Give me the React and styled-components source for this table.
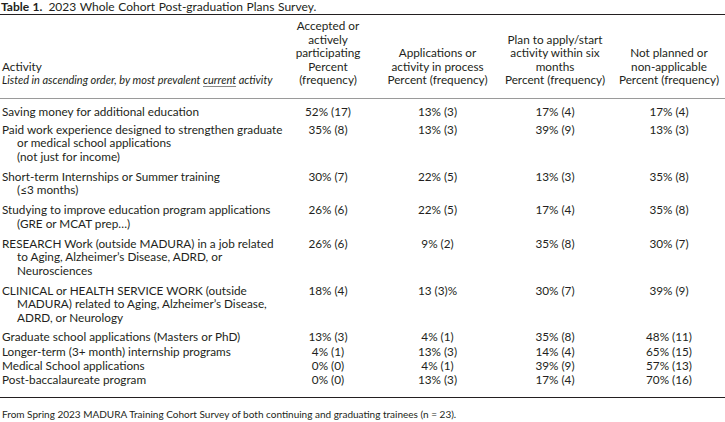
import styled, { createGlobalStyle } from "styled-components";

const GlobalStyle = createGlobalStyle`
  html, body {
    margin: 0;
    padding: 0;
    background: #ffffff;
    overflow: hidden;
  }
  body {
    font-family: Lato, "Open Sans", sans-serif;
    color: #231f20;
  }
`;

const columns = [
  ["Accepted or", "actively", "participating", "Percent", "(frequency)"],
  ["Applications or", "activity in process", "Percent (frequency)"],
  ["Plan to apply/start", "activity within six", "months", "Percent (frequency)"],
  ["Not planned or", "non-applicable", "Percent (frequency)"],
];

const rows = [
  { pt: 6, lines: ["Saving money for additional education"], values: ["52% (17)", "13% (3)", "17% (4)", "17% (4)"] },
  {
    pt: 4.5,
    lines: ["Paid work experience designed to strengthen graduate", "or medical school applications", "(not just for income)"],
    values: ["35% (8)", "13% (3)", "39% (9)", "13% (3)"],
  },
  { pt: 6.5, lines: ["Short-term Internships or Summer training", "(≤3 months)"], values: ["30% (7)", "22% (5)", "13% (3)", "35% (8)"] },
  {
    pt: 6.5,
    lines: ["Studying to improve education program applications", "(GRE or MCAT prep…)"],
    values: ["26% (6)", "22% (5)", "17% (4)", "35% (8)"],
  },
  {
    pt: 6.5,
    lines: ["RESEARCH Work (outside MADURA) in a job related", "to Aging, Alzheimer’s Disease, ADRD, or", "Neurosciences"],
    values: ["26% (6)", "9% (2)", "35% (8)", "30% (7)"],
  },
  {
    pt: 6.5,
    lines: ["CLINICAL or HEALTH SERVICE WORK (outside", "MADURA) related to Aging, Alzheimer’s Disease,", "ADRD, or Neurology"],
    values: ["18% (4)", "13 (3)%", "30% (7)", "39% (9)"],
  },
  { pt: 5.5, lines: ["Graduate school applications (Masters or PhD)"], values: ["13% (3)", "4% (1)", "35% (8)", "48% (11)"] },
  { pt: 1.5, lines: ["Longer-term (3+ month) internship programs"], values: ["4% (1)", "13% (3)", "14% (4)", "65% (15)"] },
  { pt: 0.5, lines: ["Medical School applications"], values: ["0% (0)", "4% (1)", "39% (9)", "57% (13)"] },
  { pt: 0.5, lines: ["Post-baccalaureate program"], values: ["0% (0)", "13% (3)", "17% (4)", "70% (16)"] },
];

export default function App() {
  return (
    <>
      <GlobalStyle />
      <Styled.Page>
        <Styled.Caption>
          <Styled.Label>Table 1.</Styled.Label>2023 Whole Cohort Post-graduation Plans Survey.
        </Styled.Caption>
        <Styled.Table>
          <colgroup>
            <col style={{ width: "278px" }} />
            <col style={{ width: "100px" }} />
            <col style={{ width: "119px" }} />
            <col style={{ width: "116px" }} />
            <col style={{ width: "112px" }} />
          </colgroup>
          <thead>
            <tr>
              <Styled.HeadCell $align="left">
                <Styled.Line>Activity</Styled.Line>
                <Styled.Note>
                  Listed in ascending order, by most prevalent <u>current</u> activity
                </Styled.Note>
              </Styled.HeadCell>
              {columns.map((lines) => (
                <Styled.HeadCell key={lines[0]} $align="center">
                  {lines.map((line) => (
                    <Styled.Line key={line}>{line}</Styled.Line>
                  ))}
                </Styled.HeadCell>
              ))}
            </tr>
          </thead>
          <tbody>
            {rows.map((row, index) => (
              <tr key={row.lines[0]}>
                <Styled.Cell $pt={row.pt} $last={index === rows.length - 1} $align="left">
                  {row.lines.map((line, i) => (
                    <Styled.Line key={line} $indent={i > 0}>
                      {line}
                    </Styled.Line>
                  ))}
                </Styled.Cell>
                {row.values.map((value, i) => (
                  <Styled.Cell key={i} $pt={row.pt} $last={index === rows.length - 1} $align="center">
                    <Styled.Line>{value}</Styled.Line>
                  </Styled.Cell>
                ))}
              </tr>
            ))}
          </tbody>
        </Styled.Table>
        <Styled.Footnote>
          From Spring 2023 MADURA Training Cohort Survey of both continuing and graduating trainees (n = 23).
        </Styled.Footnote>
      </Styled.Page>
    </>
  );
}

const Styled = {
  Page: styled.div`
    width: 725px;
    font-size: 11.75px;
    line-height: 13.5px;
  `,

  Caption: styled.div`
    padding: 0 0 0 1px;
    height: 14px;
    font-size: 12px;
    line-height: 13.5px;
    word-spacing: 0.5px;
  `,

  Label: styled.span`
    font-weight: 700;
    margin-right: 6px;
  `,

  Table: styled.table`
    width: 725px;
    table-layout: fixed;
    border-collapse: collapse;
    border-top: 1px solid #231f20;
    border-bottom: 1px solid #231f20;
  `,

  HeadCell: styled.th`
    font-weight: 400;
    text-align: ${({ $align }) => $align};
    vertical-align: bottom;
    padding: 4px 0 11px ${({ $align }) => ($align === "left" ? "2px" : "0")};
    border-bottom: 1px solid #9a9a9a;
  `,

  Cell: styled.td`
    text-align: ${({ $align }) => $align};
    vertical-align: top;
    padding: ${({ $pt }) => $pt}px 0 ${({ $last }) => ($last ? "11px" : "0")}
      ${({ $align }) => ($align === "left" ? "2px" : "0")};
  `,

  Line: styled.div`
    white-space: nowrap;
    padding-left: ${({ $indent }) => ($indent ? "15px" : "0")};
  `,

  Note: styled.div`
    font-style: italic;
    font-size: 11px;
    white-space: nowrap;

    u {
      text-decoration-thickness: 1px;
      text-underline-offset: 2px;
      text-decoration-color: #8a8a8a;
    }
  `,

  Footnote: styled.div`
    padding: 10px 0 0 2px;
    font-size: 10px;
    line-height: 13px;
  `,
};
